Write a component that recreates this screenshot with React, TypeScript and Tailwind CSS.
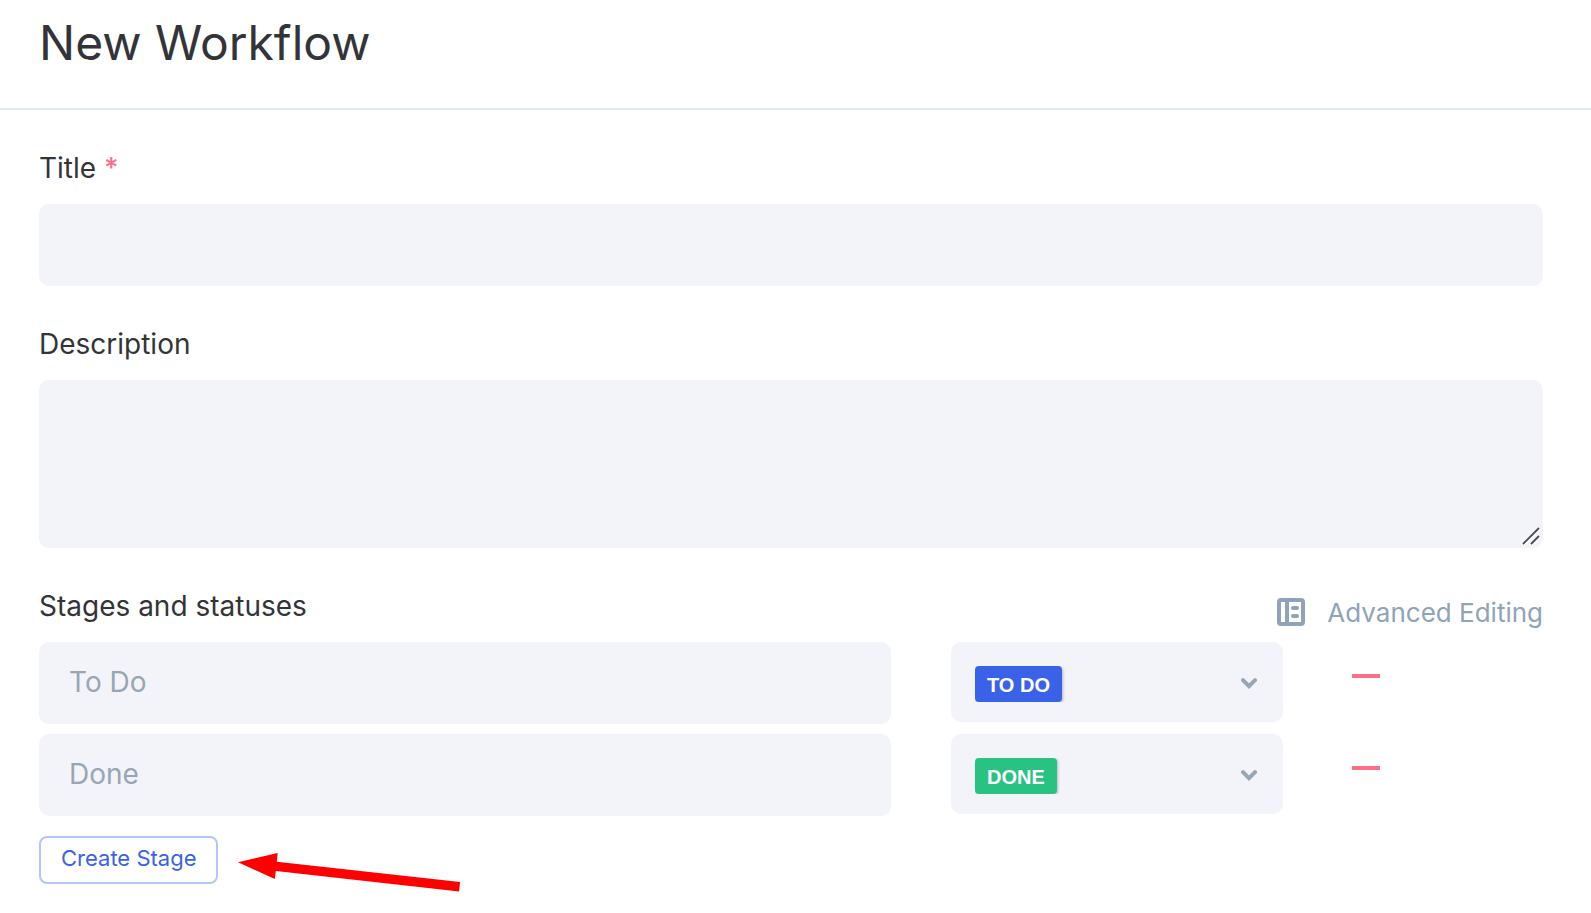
import React, { useState } from "react";

type Status = "TO DO" | "DONE";
type Stage = { id: number; name: string; status: Status };

const badgeColor: Record<Status, string> = {
  "TO DO": "bg-[#3a62e9]",
  DONE: "bg-[#28c282]",
};

const labelClass = "block text-[28px] leading-9 font-normal text-[#333438]";
const fieldClass =
  "block w-full rounded-[10px] bg-[#f3f4fa] px-[30px] pb-[2px] text-[28px] text-[#333438] outline-none placeholder:text-[#98a6b4]";

function StatusSelect({ value, label, onChange }: { value: Status; label: string; onChange: (s: Status) => void }) {
  return (
    <div className="relative flex h-20 w-[332px] shrink-0 items-center justify-between rounded-[10px] bg-[#f3f4fa] pt-1 pr-[26px] pl-6">
      <div className="overflow-hidden pr-1">
        <span
          className={`flex h-9 items-center rounded-[4px] px-3 pt-[2px] font-['Liberation_Sans',sans-serif] text-[20px] font-bold text-white shadow-[1px_1px_3px_rgba(0,0,0,0.25)] ${badgeColor[value]}`}
        >
          {value}
        </span>
      </div>
      <svg width="16" height="12" viewBox="0 0 16 12" fill="none" aria-hidden="true">
        <path d="M2 2.200 8 8.200l6-6" stroke="#98a6b4" strokeWidth="4" strokeLinecap="round" />
      </svg>
      <select
        aria-label={label}
        value={value}
        onChange={(e) => onChange(e.target.value as Status)}
        className="absolute inset-0 cursor-pointer opacity-0"
      >
        <option>TO DO</option>
        <option>DONE</option>
      </select>
    </div>
  );
}

export default function App() {
  const [stages, setStages] = useState<Stage[]>([
    { id: 1, name: "To Do", status: "TO DO" },
    { id: 2, name: "Done", status: "DONE" },
  ]);

  return (
    <div className="min-h-screen bg-white font-['Inter',sans-serif]">
      <header className="border-b-2 border-[#e5ebf2] px-[39px] pt-[13px] pb-[35px]">
        <h1 className="text-[48px] leading-[60px] font-normal text-[#333438]">New Workflow</h1>
      </header>

      <form className="pt-10 pr-12 pb-5 pl-[39px]" onSubmit={(e) => e.preventDefault()}>
        <label htmlFor="title" className={labelClass}>
          Title <span className="font-medium text-[#ff6f88]">*</span>
        </label>
        <input id="title" required className={`mt-[18px] h-[82px] ${fieldClass}`} />

        <label htmlFor="description" className={`mt-10 ${labelClass}`}>
          Description
        </label>
        <div className="relative mt-[18px]">
          <textarea id="description" className={`h-[168px] resize-none pt-5 ${fieldClass}`} />
          <svg className="absolute right-[3px] bottom-[3px]" width="18" height="18" viewBox="0 0 18 18" aria-hidden="true">
            <path d="M2 18 18 2M10 18l8-8" stroke="#fff" strokeWidth="1.500" />
            <path d="M1 17 17 1M9 17l8-8" stroke="#4b4c50" strokeWidth="1.800" />
          </svg>
        </div>

        <div className="mt-10 flex items-start justify-between">
          <h2 className={labelClass}>Stages and statuses</h2>
          <button type="button" className="mt-[6px] flex items-start gap-[22px] text-[26px] leading-[38px] text-[#90a3b9]">
            <svg className="mt-1" width="28" height="28" viewBox="0 0 28 28" fill="none" aria-hidden="true">
              <rect x="2" y="2" width="24" height="24" rx="2" stroke="currentColor" strokeWidth="4" />
              <path d="M10 3v22" stroke="currentColor" strokeWidth="4" />
              <path d="M16 10h4M16 18h4" stroke="currentColor" strokeWidth="4" strokeLinecap="round" />
            </svg>
            Advanced Editing
          </button>
        </div>

        <div className="mt-[10px] flex flex-col gap-[10px]">
          {stages.map((stage) => (
            <div key={stage.id} className="flex items-start">
              <input
                aria-label="Stage name"
                placeholder={stage.name}
                className={`mr-[60px] h-[82px] min-w-0 flex-1 ${fieldClass}`}
              />
              <StatusSelect
                value={stage.status}
                label={`Status of ${stage.name}`}
                onChange={(status) => setStages(stages.map((s) => (s.id === stage.id ? { ...s, status } : s)))}
              />
              <div className="w-[260px] shrink-0 pl-[69px]">
                <button
                  type="button"
                  aria-label={`Remove ${stage.name}`}
                  onClick={() => setStages(stages.filter((s) => s.id !== stage.id))}
                  className="flex h-[68px] items-center"
                >
                  <span className="h-1 w-7 bg-[#ff6f88]" />
                </button>
              </div>
            </div>
          ))}
        </div>

        <div className="mt-5 flex items-start">
          <button
            type="button"
            onClick={() => setStages([...stages, { id: Date.now(), name: "To Do", status: "TO DO" }])}
            className="h-12 rounded-[8px] border-2 border-[#b7c6f8] px-5 pb-1 text-[22px] leading-8 text-[#3a62e9]"
          >
            Create Stage
          </button>
          <svg className="mt-4 ml-5" width="222" height="40" viewBox="0 0 222 40" aria-hidden="true">
            <path d="M0 10.300 39.700 1 38.800 9.800 222 30l-.900 9.500L37.800 18.900 36.800 27Z" fill="#fe0000" />
          </svg>
        </div>
      </form>
    </div>
  );
}
